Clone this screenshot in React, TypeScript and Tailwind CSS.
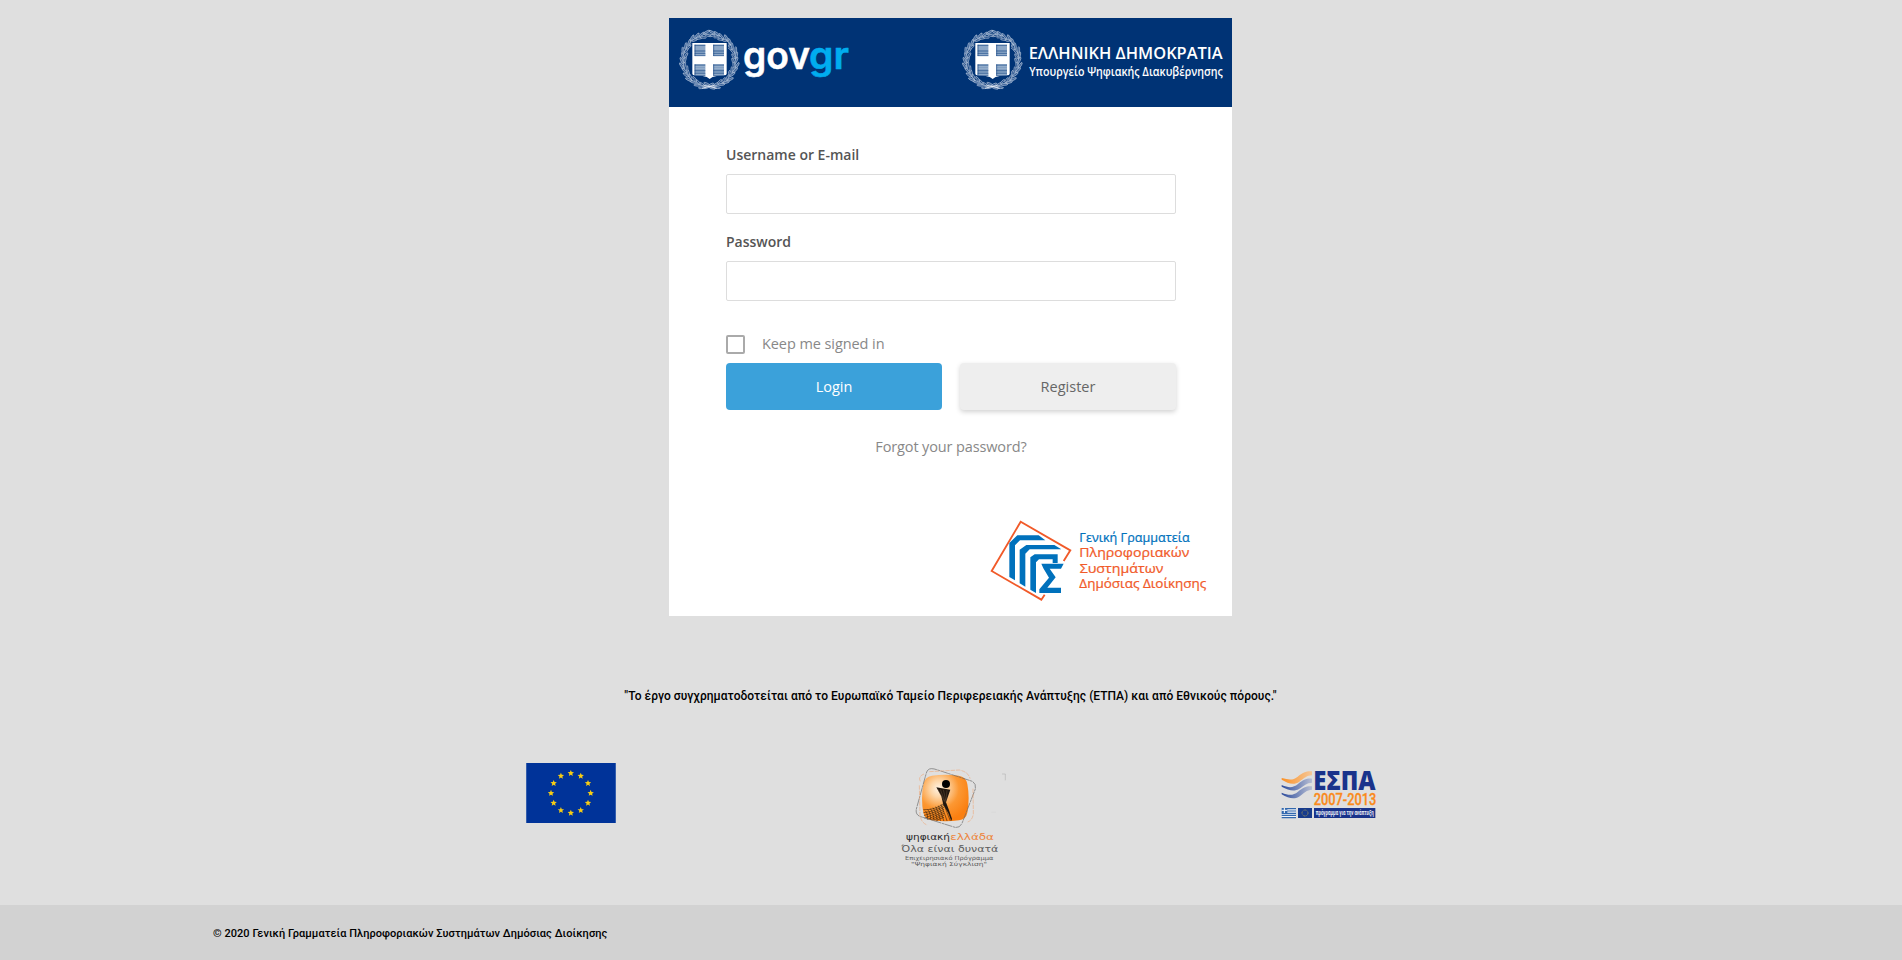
import React from "react";

function Emblem({ x, y }: { x: number; y: number }) {
  const leaves = Array.from({ length: 34 }, (_, i) => (i * 360) / 34 + 5);
  return (
    <g transform={`translate(${x} ${y})`}>
      <circle r="79" fill="none" stroke="#b9c8dc" strokeWidth="2" />
      {leaves.map((a, i) => {
        const t = a < 180 ? 1 : -1;
        const wobble = (i % 3) * 2 - 2;
        return (
          <g key={a} transform={`rotate(${a}) translate(0 ${-78 + wobble})`} stroke="#dbe4ef" strokeWidth="1.5">
            <ellipse cx="0" cy="-5" rx="10" ry="3" fill="#3c639a" transform={`rotate(${t * 22} 0 -5)`} />
            <ellipse cx="2" cy="5" rx="9" ry="2.8" fill="#27518c" transform={`rotate(${t * -18} 2 5)`} />
          </g>
        );
      })}
      <path d="M-22 84L18 74M-18 74L22 84" stroke="#e8eef6" strokeWidth="2.5" />
      <path d="M-54 -55H56V42Q56 48 48 48L22 51Q8 53 1 59Q-6 53 -20 51L-46 48Q-54 48 -54 42Z" fill="#003375" />
      <path d="M-51 -52H52V40Q52 45 44 45L22 47Q8 49 1 56Q-6 49 -20 47L-43 45Q-51 45 -51 40Z" fill="#fff" />
      {[[-44, -47], [12, -47], [-44, 12], [12, 12]].map(([qx, qy]) => (
        <g key={`${qx}${qy}`}>
          <rect x={qx} y={qy} width="32" height="34" fill="#7f9dc0" />
          <path
            d={`M${qx} ${qy + 2}h32M${qx} ${qy + 19}h32M${qx} ${qy + 27}h32M${qx} ${qy + 33}h32`}
            stroke="#2f5b92"
            strokeWidth="2.2"
          />
          <path d={`M${qx} ${qy + 7}h32M${qx} ${qy + 13}h32M${qx} ${qy + 30}h32`} stroke="#b5c7dd" strokeWidth="1.5" />
          <path d={`M${qx + 1} ${qy}v34`} stroke="#174683" strokeWidth="2" />
        </g>
      ))}
    </g>
  );
}

function GovLogo() {
  return (
    <svg className="h-[89px] w-[200px] overflow-visible" viewBox="27 24 600 267" role="img" aria-label="gov.gr">
      <Emblem x={148} y={151} />
      <g fontFamily="Inter" fontWeight="600" fontSize="112" strokeWidth="1.5">
        <text x="249" y="177" textLength="201" lengthAdjust="spacingAndGlyphs" fill="#fff" stroke="#fff">gov</text>
        <text x="447" y="177" textLength="120" lengthAdjust="spacingAndGlyphs" fill="#00adef" stroke="#00adef">gr</text>
      </g>
    </svg>
  );
}

function MinistryLogo() {
  return (
    <svg className="h-[89px] w-[300px] overflow-visible" viewBox="-39 24 900 267">
      <Emblem x={142} y={151} />
      <g fill="#fff" fontFamily="'Open Sans'">
        <text x="251" y="148" fontSize="48" fontWeight="600" textLength="582" lengthAdjust="spacingAndGlyphs">ΕΛΛΗΝΙΚΗ ΔΗΜΟΚΡΑΤΙΑ</text>
        <text x="253" y="197" fontSize="38" fontWeight="600" textLength="580" lengthAdjust="spacingAndGlyphs">Υπουργείο Ψηφιακής Διακυβέρνησης</text>
      </g>
    </svg>
  );
}

function SecretariatLogo() {
  return (
    <svg className="h-[90px] w-[230px] overflow-visible" viewBox="50 50 690 270">
      <path d="M280 185L300 153L151 67L64 215L213 301L223 286" fill="none" stroke="#f15a29" strokeWidth="5.5" />
      <g fill="#0071bc">
        <path d="M141 108H205L225 123H149L134 138V243L117 233V131Z" />
        <path d="M168 137H252L273 150H178L165 163V262L148 252V151Z" />
        <path d="M193 165H262V191H247V180H206L197 189V281L180 271V174Z" />
        <path d="M213 193H280L272 208H238L256 234L231 265H272V281H207V270L236 235L219 207Z" />
      </g>
      <g fontFamily="'Open Sans'" fontSize="39" fontWeight="500" fill="#f15a29" stroke="#f15a29" strokeWidth="0.7">
        <text x="327" y="127" textLength="331" lengthAdjust="spacingAndGlyphs" fill="#0071bc" stroke="#0071bc">Γενική Γραμματεία</text>
        <text x="327" y="173" textLength="330" lengthAdjust="spacingAndGlyphs">Πληροφοριακών</text>
        <text x="328" y="220" textLength="251" lengthAdjust="spacingAndGlyphs">Συστημάτων</text>
        <text x="327" y="267" textLength="381" lengthAdjust="spacingAndGlyphs">Δημόσιας Διοίκησης</text>
      </g>
    </svg>
  );
}

function star(cx: number, cy: number, r: number) {
  return Array.from({ length: 10 }, (_, i) => {
    const a = (i * Math.PI) / 5 - Math.PI / 2;
    const d = i % 2 ? r * 0.45 : r;
    return `${cx + d * Math.cos(a)},${cy + d * Math.sin(a)}`;
  }).join(" ");
}

function EuFlag() {
  return (
    <svg className="mt-[3px] h-[60px] w-[90px]" viewBox="0 0 270 180">
      <rect width="270" height="180" fill="#003399" />
      <path d="M1 0V180M269 0V180" stroke="#4a71b6" strokeWidth="2.5" />
      {Array.from({ length: 12 }, (_, i) => {
        const a = (i * Math.PI) / 6;
        return <polygon key={i} points={star(134.5 + 59.5 * Math.sin(a), 90.5 - 59.5 * Math.cos(a), 10)} fill="#f7cd14" />;
      })}
    </svg>
  );
}

function DigitalGreeceLogo() {
  const fan = Array.from({ length: 8 }, (_, i) => i);
  return (
    <svg className="ml-1 h-[120px] w-[120px] overflow-visible" viewBox="30 30 360 360">
      <defs>
        <radialGradient id="amber" cx="0.36" cy="0.3" r="0.72">
          <stop offset="0" stopColor="#fff4e6" />
          <stop offset="0.25" stopColor="#fdd5a6" />
          <stop offset="0.6" stopColor="#fc9833" />
          <stop offset="1" stopColor="#fa7f10" />
        </radialGradient>
        <clipPath id="tile">
          <path d="M135 84Q193 66 256 84Q276 146 257 207Q196 220 134 207Q117 146 135 84Z" />
        </clipPath>
      </defs>
      <path d="M156 77Q196 71 236 77Q258 80 262 102Q270 146 262 188Q258 208 237 211Q196 217 155 211Q134 208 130 188Q122 146 130 103Q134 80 156 77Z" fill="url(#amber)" />
      <g clipPath="url(#tile)" fill="none" stroke="#20150c" strokeWidth="1.6">
        {fan.map((i) => (
          <path key={i} d={`M130 ${179 + i * 9}Q165 ${181 + i * 4} 192 ${160 + i * 6}`} />
        ))}
        {fan.map((i) => (
          <path key={`r${i}`} d={`M${191 - i * 8} ${161 + i * 3}Q${201 - i * 8} 188 ${212 - i * 10} 215`} />
        ))}
      </g>
      <path d="M169 112L211 119L198 157Q207 180 216 206L214 213Q207 189 190 164L184 139Z" fill="#21170f" />
      <path d="M173 117L193 154M181 118L196 158M190 119L198 155M201 121L198 151" stroke="#856650" strokeWidth="1" />
      <circle cx="198" cy="102" r="12" fill="#000" />
      <g fill="none">
        <path d="M154 56Q143 56 139 69L109 177Q106 193 119 199L225 232Q239 235 246 220L286 117Q289 101 277 94L170 59Q162 56 154 56Z" stroke="#686868" strokeWidth="2" strokeDasharray="23 2 8 1" />
        <path d="M121 94Q113 80 132 72M118 106L120 197Q125 220 142 225M148 65L238 60Q266 66 270 86M279 116L280 192Q277 211 263 216" stroke="#efa06b" strokeWidth="1.6" strokeDasharray="13 3" />
        <path d="M366 72H376V91" stroke="#aaa" strokeWidth="1.5" />
        <path d="M334 187H348" stroke="#d0d0d0" strokeWidth="1" />
      </g>
      <g fontFamily="'DejaVu Sans'" fontWeight="400" fill="#5b5b5b">
        <text x="78" y="271" fontSize="24" textLength="132" lengthAdjust="spacingAndGlyphs" fill="#292929">ψηφιακή</text>
        <text x="211" y="271" fontSize="24" textLength="131" lengthAdjust="spacingAndGlyphs" fill="#ed843b">ελλάδα</text>
        <text x="64" y="305" fontSize="24" textLength="291" lengthAdjust="spacingAndGlyphs">Όλα είναι δυνατά</text>
        <text x="75" y="330" fontSize="17" textLength="265" lengthAdjust="spacingAndGlyphs">Επιχειρησιακό Πρόγραμμα</text>
        <text x="93" y="349" fontSize="17" textLength="228" lengthAdjust="spacingAndGlyphs">"Ψηφιακή Σύγκλιση"</text>
      </g>
    </svg>
  );
}

function EspaLogo() {
  return (
    <svg className="mt-[4px] h-[60px] w-[100px] overflow-visible" viewBox="60 30 300 180">
      <defs>
        <linearGradient id="wave1"><stop stopColor="#fb9126" /><stop offset="1" stopColor="#f5c798" /></linearGradient>
        <linearGradient id="wave2"><stop stopColor="#2d4c9c" /><stop offset="1" stopColor="#b8bfd4" /></linearGradient>
      </defs>
      <path d="M65 72C88 78 99 79 113 68C129 55 139 51 156 52V64C141 64 133 73 118 83C101 95 84 88 65 77Z" fill="url(#wave1)" />
      <path d="M65 93C87 102 99 102 114 90C130 77 139 73 156 74V86C140 86 132 96 117 105C101 114 85 108 65 98Z" fill="url(#wave2)" />
      <path d="M65 116C87 125 99 125 114 113C130 100 139 96 156 97V107C140 107 132 118 117 128C101 138 85 132 65 121Z" fill="url(#wave2)" />
      <text x="160" y="108" fontFamily="'Open Sans'" fontSize="80" fontWeight="800" textLength="187" lengthAdjust="spacingAndGlyphs" fill="#19338b">ΕΣΠΑ</text>
      <text x="161" y="154" fontFamily="Roboto" fontSize="50" fontWeight="500" textLength="188" lengthAdjust="spacingAndGlyphs" fill="#fa8a1b" stroke="#fa8a1b">2007-2013</text>
      <rect x="65" y="162" width="43" height="30" fill="#edf1f6" />
      <path d="M81 164H108M81 171H108M65 178H108M65 184H108M65 191H108" stroke="#3268ae" strokeWidth="3.5" />
      <rect x="65" y="162" width="17" height="15" fill="#3268ae" />
      <path d="M73 162V177M65 169H82" stroke="#fff" strokeWidth="3" />
      <rect x="114" y="162" width="42" height="30" fill="#173b8c" />
      <circle cx="135" cy="177" r="9" fill="none" stroke="#bda84d" strokeWidth="2.5" strokeDasharray="2.5 2.2" />
      <rect x="162" y="162" width="184" height="30" fill="#19338b" />
      <text x="167" y="183" fontFamily="Roboto" fontSize="20" fontWeight="700" textLength="174" lengthAdjust="spacingAndGlyphs" fill="#eef0f7">πρόγραμμα για την ανάπτυξη</text>
    </svg>
  );
}

function Field({ id, label, type }: { id: string; label: string; type: string }) {
  return (
    <div className="h-[87px]">
      <label htmlFor={id} className="flex h-[34px] items-start pt-[4px] text-[14px] leading-[22px] font-semibold text-[#555]">
        {label}
      </label>
      <input id={id} type={type} className="block h-10 w-full rounded-[2px] border border-[#ddd] bg-white px-3 outline-none" />
    </div>
  );
}

export default function App() {
  return (
    <div className="flex h-[960px] w-full flex-col overflow-hidden bg-[#dfdfdf] font-['Open_Sans',sans-serif]">
      <main className="flex flex-1 flex-col items-center pt-[18px] pr-px">
        <section className="flex h-[598px] w-[563px] flex-col bg-white">
          <header className="flex h-[89px] justify-between bg-[#003375]">
            <GovLogo />
            <MinistryLogo />
          </header>
          <form className="ml-[57px] flex w-[450px] flex-col pt-[33px]" onSubmit={(e) => e.preventDefault()}>
            <Field id="username" label="Username or E-mail" type="text" />
            <Field id="password" label="Password" type="password" />
            <label className="mt-5 flex h-[29px] items-start text-[14.5px] leading-[19px] tracking-[-0.08px] text-[#888]">
              <input type="checkbox" className="mt-[1px] mr-[17px] size-[19px] appearance-none rounded-[2px] border-2 border-[#aaa]" />
              <span>Keep me signed in</span>
            </label>
            <div className="flex gap-[18px] text-[14.5px]">
              <button className="h-[47px] flex-1 rounded-[4px] bg-[#3ba1da] text-white">Login</button>
              <button className="h-[47px] flex-1 rounded-[4px] bg-[#eee] text-[#666] shadow-[0_2px_5px_rgba(0,0,0,0.18)]">Register</button>
            </div>
            <a href="#" className="mt-[26px] self-center text-[14.5px] leading-[22px] tracking-[-0.13px] text-[#888]">Forgot your password?</a>
          </form>
          <div className="mt-auto flex h-[100px] justify-end pr-[15px]">
            <SecretariatLogo />
          </div>
        </section>
        <p className="mt-[69px] font-[Roboto,sans-serif] text-[12px] leading-[22px] font-medium tracking-[0.035px] text-black">
          "Το έργο συγχρηματοδοτείται από το Ευρωπαϊκό Ταμείο Περιφερειακής Ανάπτυξης (ΕΤΠΑ) και από Εθνικούς πόρους."
        </p>
        <div className="mt-[53px] flex w-[861px] items-start justify-between pr-px pl-[6px]">
          <EuFlag />
          <DigitalGreeceLogo />
          <EspaLogo />
        </div>
      </main>
      <footer className="flex h-[55px] items-center bg-[#d2d2d2] pt-1 pl-[213px] font-[Roboto,sans-serif] text-[11px] font-medium tracking-[0.045px] text-black">
        © 2020 Γενική Γραμματεία Πληροφοριακών Συστημάτων Δημόσιας Διοίκησης
      </footer>
    </div>
  );
}
